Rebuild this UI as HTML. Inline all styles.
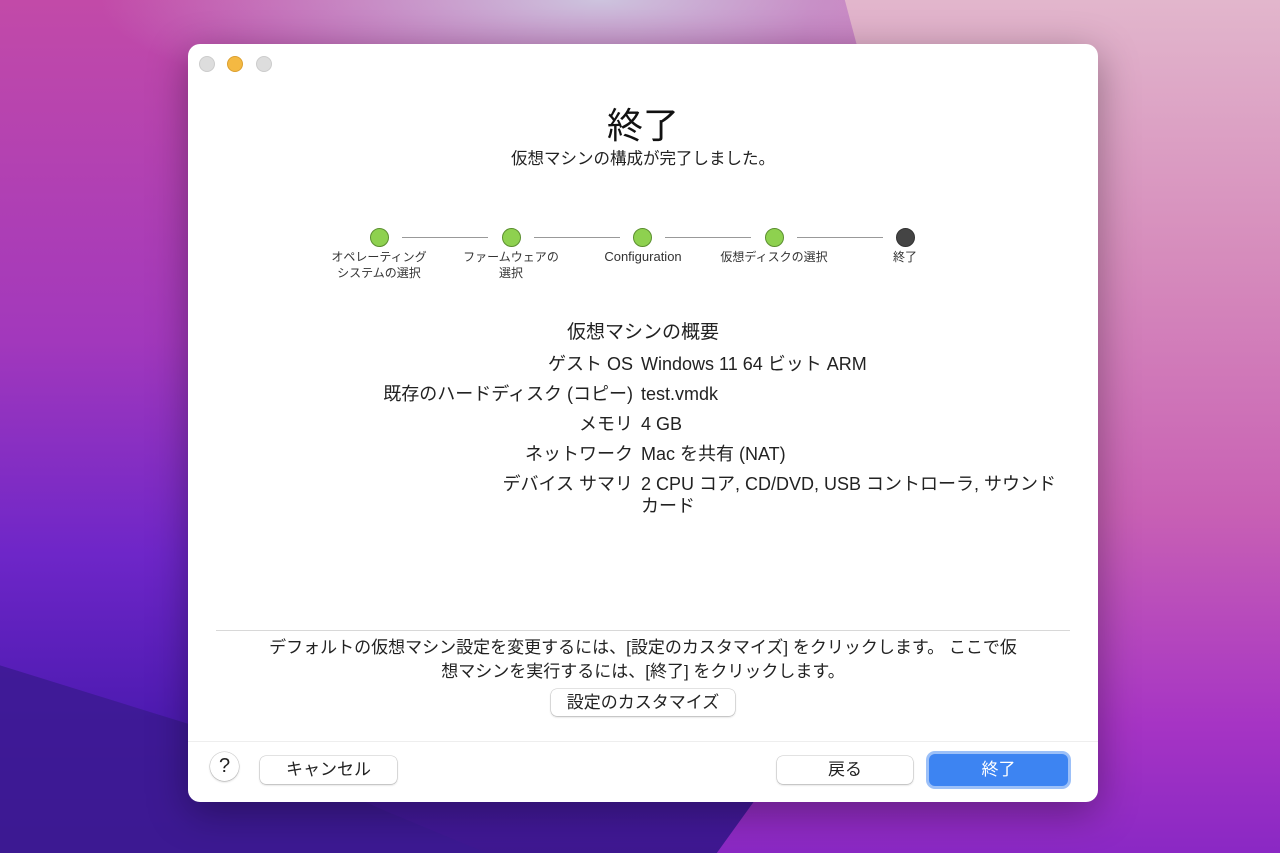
<!DOCTYPE html>
<html><head><meta charset="utf-8"><style>
*{margin:0;padding:0;box-sizing:border-box}
body{width:1280px;height:853px;overflow:hidden;position:relative;font-family:"Liberation Sans","Noto Sans CJK JP",sans-serif;color:#222;
background:
radial-gradient(ellipse 500px 120px at 600px 0px,#cdc4de 0%,rgba(205,196,222,0) 100%),
radial-gradient(ellipse 400px 300px at 1200px 80px,#e4bcd2 0%,rgba(228,188,210,0) 100%),
linear-gradient(180deg,#c24aa8 0%,#a238bc 40%,#6e26c8 65%,#4c1ab0 85%,#3e1890 100%);}
.bgr{position:absolute;inset:0;background:linear-gradient(180deg,#e2b6cc 0%,#d68cbc 30%,#c860b4 60%,#a634c4 85%,#8a28c4 100%);clip-path:polygon(66% 0,100% 0,100% 100%,56% 100%,68% 75%,74% 45%);}
.bgd{position:absolute;inset:0;background:#3c1a92;clip-path:polygon(0 78%,15% 85%,30% 95%,38% 100%,0 100%);opacity:.85}
.win{position:absolute;left:188px;top:44px;width:910px;height:758px;background:#fff;border-radius:12px;box-shadow:0 10px 40px rgba(0,0,0,.35);overflow:hidden}
.a{position:absolute}
.tl{position:absolute;top:12px;width:16px;height:16px;border-radius:50%;background:#ddd;border:1px solid #ccc}
.c{text-align:center;white-space:nowrap}
.dot{position:absolute;width:19px;height:19px;border-radius:50%;background:#8ed14f;border:1px solid #5c8f30}
.ln{position:absolute;height:1px;background:#999;top:193px}
.sl{position:absolute;font-size:12px;line-height:16px;text-align:center;width:130px;color:#333}
.row{position:absolute;font-size:18px;line-height:22px;white-space:nowrap}
.btn{position:absolute;background:#fff;border-radius:6px;box-shadow:0 0 0 .5px rgba(0,0,0,.2),0 1px 2px rgba(0,0,0,.2);font-size:17px;text-align:center;line-height:28px}
</style></head><body>
<div class="bgr"></div><div class="bgd"></div>
<div class="win">
<div class="tl" style="left:11px"></div>
<div class="tl" style="left:39px;background:#f4b942;border-color:#dca030"></div>
<div class="tl" style="left:68px"></div>
<div class="a c" style="left:0;width:910px;top:60px;font-size:36px;line-height:44px;color:#111">終了</div>
<div class="a c" style="left:0;width:910px;top:104px;font-size:16.5px;line-height:22px">仮想マシンの構成が完了しました。</div>
<div class="dot" style="left:182px;top:184px"></div>
<div class="dot" style="left:314px;top:184px"></div>
<div class="dot" style="left:445px;top:184px"></div>
<div class="dot" style="left:577px;top:184px"></div>
<div class="dot" style="left:708px;top:184px;background:#444;border-color:#333"></div>
<div class="ln" style="left:214px;width:86px"></div>
<div class="ln" style="left:346px;width:86px"></div>
<div class="ln" style="left:477px;width:86px"></div>
<div class="ln" style="left:609px;width:86px"></div>
<div class="sl" style="left:126px;top:205px">オペレーティング<br>システムの選択</div>
<div class="sl" style="left:258px;top:205px">ファームウェアの<br>選択</div>
<div class="sl" style="left:390px;top:205px;font-size:13px">Configuration</div>
<div class="sl" style="left:521px;top:205px">仮想ディスクの選択</div>
<div class="sl" style="left:652px;top:205px">終了</div>
<div class="a c" style="left:0;width:910px;top:278px;font-size:19px;line-height:22px">仮想マシンの概要</div>
<div class="row" style="right:465px;top:309px">ゲスト OS</div><div class="row" style="left:453px;top:309px">Windows 11 64 ビット ARM</div>
<div class="row" style="right:465px;top:339px">既存のハードディスク (コピー)</div><div class="row" style="left:453px;top:339px">test.vmdk</div>
<div class="row" style="right:465px;top:369px">メモリ</div><div class="row" style="left:453px;top:369px">4 GB</div>
<div class="row" style="right:465px;top:399px">ネットワーク</div><div class="row" style="left:453px;top:399px">Mac を共有 (NAT)</div>
<div class="row" style="right:465px;top:429px">デバイス サマリ</div><div class="row" style="left:453px;top:429px">2 CPU コア, CD/DVD, USB コントローラ, サウンド<br>カード</div>
<div class="a" style="left:28px;width:854px;top:586px;height:1px;background:#d8d8d8"></div>
<div class="a c" style="left:0;width:910px;top:592px;font-size:17px;line-height:24px">デフォルトの仮想マシン設定を変更するには、[設定のカスタマイズ] をクリックします。 ここで仮<br>想マシンを実行するには、[終了] をクリックします。</div>
<div class="btn" style="left:363px;top:645px;width:184px;height:27px;line-height:27px">設定のカスタマイズ</div>
<div class="a" style="left:0;width:910px;top:697px;height:1px;background:#eee"></div>
<div class="btn" style="left:22px;top:708px;width:29px;height:29px;border-radius:50%;font-size:20px;line-height:28px">?</div>
<div class="btn" style="left:72px;top:712px;width:137px;height:28px">キャンセル</div>
<div class="btn" style="left:589px;top:712px;width:136px;height:28px">戻る</div>
<div class="btn" style="left:741px;top:710px;width:139px;height:32px;background:#3d84f2;color:#fff;line-height:32px;box-shadow:0 0 0 3px #9cc0f8">終了</div>
</div>
</body></html>
